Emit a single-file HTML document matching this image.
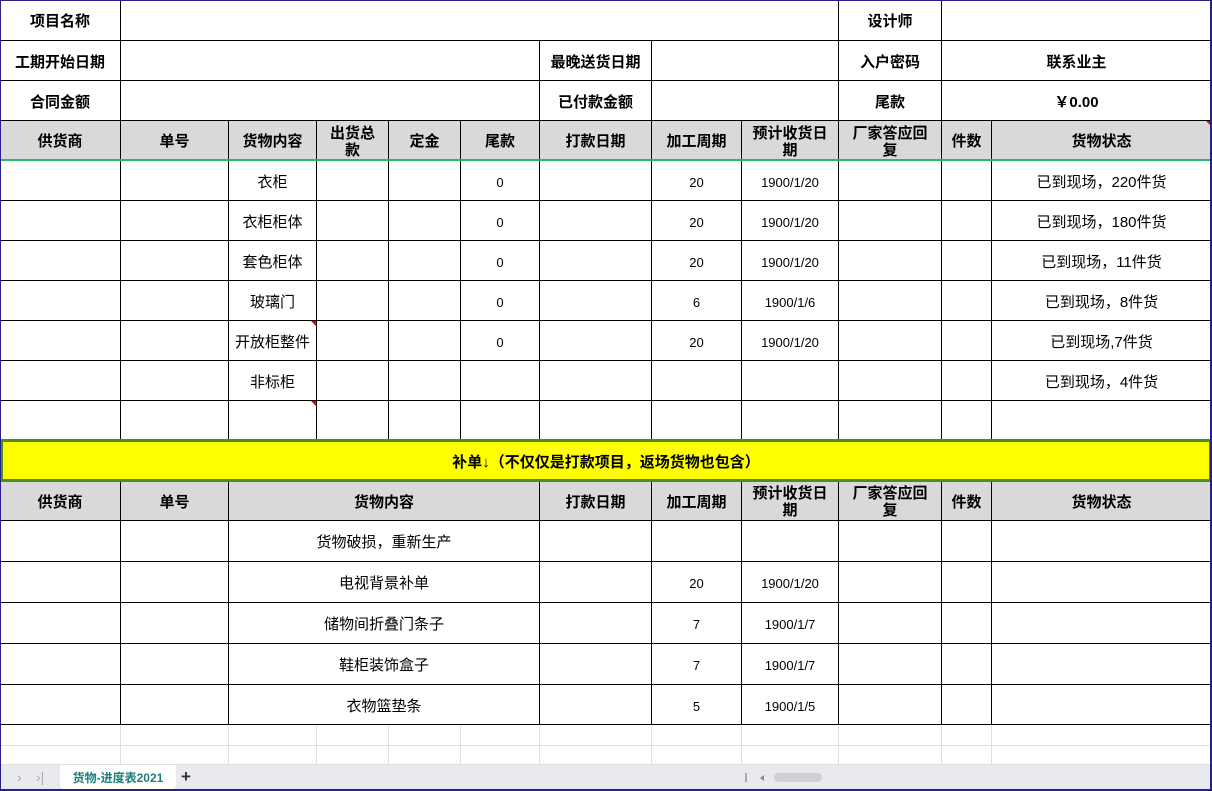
<!DOCTYPE html>
<html><head><meta charset="utf-8"><style>
*{margin:0;padding:0;box-sizing:border-box}
body{width:1212px;height:791px;overflow:hidden;background:#fff;font-family:"Liberation Sans","Noto Sans CJK SC",sans-serif;font-size:15px;color:#000;position:relative}
.r{position:absolute;left:0;width:1212px}
.c{position:absolute;top:0;height:100%;border-right:1px solid #000;border-bottom:1px solid #000;display:flex;align-items:center;justify-content:center;text-align:center;line-height:15px;padding-top:3px}
.b{font-weight:bold}
.h .c{background:#d9d9d9;font-weight:bold;line-height:17px;padding-top:2px}
.n{font-size:13px}
.g{position:absolute;top:0;height:100%;border-right:1px solid #e0e0e0;border-bottom:1px solid #e0e0e0}
.tri{position:absolute;right:0;top:0;width:0;height:0;border-top:5px solid #e00;border-left:5px solid transparent}
</style></head><body>
<div class="r" style="top:0;height:41px">
<div class="c b" style="left:0;width:121px">项目名称</div>
<div class="c" style="left:121px;width:718px"></div>
<div class="c b" style="left:839px;width:103px">设计师</div>
<div class="c" style="left:942px;width:270px"></div>
</div>
<div class="r" style="top:41px;height:40px">
<div class="c b" style="left:0;width:121px">工期开始日期</div>
<div class="c" style="left:121px;width:419px"></div>
<div class="c b" style="left:540px;width:112px">最晚送货日期</div>
<div class="c" style="left:652px;width:187px"></div>
<div class="c b" style="left:839px;width:103px">入户密码</div>
<div class="c b" style="left:942px;width:270px">联系业主</div>
</div>
<div class="r" style="top:81px;height:40px">
<div class="c b" style="left:0;width:121px">合同金额</div>
<div class="c" style="left:121px;width:419px"></div>
<div class="c b" style="left:540px;width:112px">已付款金额</div>
<div class="c" style="left:652px;width:187px"></div>
<div class="c b" style="left:839px;width:103px">尾款</div>
<div class="c b" style="left:942px;width:270px">￥0.00</div>
</div>
<div class="r h" style="top:121px;height:40px">
<div class="c" style="left:0;width:121px">供货商</div>
<div class="c" style="left:121px;width:108px">单号</div>
<div class="c" style="left:229px;width:88px">货物内容</div>
<div class="c" style="left:317px;width:72px">出货总<br>款</div>
<div class="c" style="left:389px;width:72px">定金</div>
<div class="c" style="left:461px;width:79px">尾款</div>
<div class="c" style="left:540px;width:112px">打款日期</div>
<div class="c" style="left:652px;width:90px">加工周期</div>
<div class="c" style="left:742px;width:97px">预计收货日<br>期</div>
<div class="c" style="left:839px;width:103px">厂家答应回<br>复</div>
<div class="c" style="left:942px;width:50px">件数</div>
<div class="c" style="left:992px;width:220px">货物状态<span class="tri"></span></div>
</div>
<div style="position:absolute;top:159px;left:0;width:1212px;height:2px;background:#2bb673"></div>

<div class="r" style="top:161px;height:40px"><div class="c" style="left:0;width:121px"></div><div class="c" style="left:121px;width:108px"></div><div class="c" style="left:229px;width:88px">衣柜</div><div class="c" style="left:317px;width:72px"></div><div class="c" style="left:389px;width:72px"></div><div class="c n" style="left:461px;width:79px">0</div><div class="c" style="left:540px;width:112px"></div><div class="c n" style="left:652px;width:90px">20</div><div class="c n" style="left:742px;width:97px">1900/1/20</div><div class="c" style="left:839px;width:103px"></div><div class="c" style="left:942px;width:50px"></div><div class="c" style="left:992px;width:220px">已到现场，220件货</div></div>
<div class="r" style="top:201px;height:40px"><div class="c" style="left:0;width:121px"></div><div class="c" style="left:121px;width:108px"></div><div class="c" style="left:229px;width:88px">衣柜柜体</div><div class="c" style="left:317px;width:72px"></div><div class="c" style="left:389px;width:72px"></div><div class="c n" style="left:461px;width:79px">0</div><div class="c" style="left:540px;width:112px"></div><div class="c n" style="left:652px;width:90px">20</div><div class="c n" style="left:742px;width:97px">1900/1/20</div><div class="c" style="left:839px;width:103px"></div><div class="c" style="left:942px;width:50px"></div><div class="c" style="left:992px;width:220px">已到现场，180件货</div></div>
<div class="r" style="top:241px;height:40px"><div class="c" style="left:0;width:121px"></div><div class="c" style="left:121px;width:108px"></div><div class="c" style="left:229px;width:88px">套色柜体</div><div class="c" style="left:317px;width:72px"></div><div class="c" style="left:389px;width:72px"></div><div class="c n" style="left:461px;width:79px">0</div><div class="c" style="left:540px;width:112px"></div><div class="c n" style="left:652px;width:90px">20</div><div class="c n" style="left:742px;width:97px">1900/1/20</div><div class="c" style="left:839px;width:103px"></div><div class="c" style="left:942px;width:50px"></div><div class="c" style="left:992px;width:220px">已到现场，11件货</div></div>
<div class="r" style="top:281px;height:40px"><div class="c" style="left:0;width:121px"></div><div class="c" style="left:121px;width:108px"></div><div class="c" style="left:229px;width:88px">玻璃门</div><div class="c" style="left:317px;width:72px"></div><div class="c" style="left:389px;width:72px"></div><div class="c n" style="left:461px;width:79px">0</div><div class="c" style="left:540px;width:112px"></div><div class="c n" style="left:652px;width:90px">6</div><div class="c n" style="left:742px;width:97px">1900/1/6</div><div class="c" style="left:839px;width:103px"></div><div class="c" style="left:942px;width:50px"></div><div class="c" style="left:992px;width:220px">已到现场，8件货</div></div>
<div class="r" style="top:321px;height:40px"><div class="c" style="left:0;width:121px"></div><div class="c" style="left:121px;width:108px"></div><div class="c" style="left:229px;width:88px">开放柜整件<span class="tri"></span></div><div class="c" style="left:317px;width:72px"></div><div class="c" style="left:389px;width:72px"></div><div class="c n" style="left:461px;width:79px">0</div><div class="c" style="left:540px;width:112px"></div><div class="c n" style="left:652px;width:90px">20</div><div class="c n" style="left:742px;width:97px">1900/1/20</div><div class="c" style="left:839px;width:103px"></div><div class="c" style="left:942px;width:50px"></div><div class="c" style="left:992px;width:220px">已到现场,7件货</div></div>
<div class="r" style="top:361px;height:40px"><div class="c" style="left:0;width:121px"></div><div class="c" style="left:121px;width:108px"></div><div class="c" style="left:229px;width:88px">非标柜</div><div class="c" style="left:317px;width:72px"></div><div class="c" style="left:389px;width:72px"></div><div class="c" style="left:461px;width:79px"></div><div class="c" style="left:540px;width:112px"></div><div class="c" style="left:652px;width:90px"></div><div class="c" style="left:742px;width:97px"></div><div class="c" style="left:839px;width:103px"></div><div class="c" style="left:942px;width:50px"></div><div class="c" style="left:992px;width:220px">已到现场，4件货</div></div>
<div class="r" style="top:401px;height:39px"><div class="c" style="left:0;width:121px"></div><div class="c" style="left:121px;width:108px"></div><div class="c" style="left:229px;width:88px"><span class="tri"></span></div><div class="c" style="left:317px;width:72px"></div><div class="c" style="left:389px;width:72px"></div><div class="c" style="left:461px;width:79px"></div><div class="c" style="left:540px;width:112px"></div><div class="c" style="left:652px;width:90px"></div><div class="c" style="left:742px;width:97px"></div><div class="c" style="left:839px;width:103px"></div><div class="c" style="left:942px;width:50px"></div><div class="c" style="left:992px;width:220px"></div></div>

<div style="position:absolute;top:439px;left:0;width:1212px;height:43px;background:#ffff00;border:3px solid #4a8f24;display:flex;align-items:center;justify-content:center;font-weight:bold;font-size:15px;padding-top:1px">补单↓（不仅仅是打款项目，返场货物也包含）</div>

<div class="r h" style="top:482px;height:39px">
<div class="c" style="left:0;width:121px">供货商</div>
<div class="c" style="left:121px;width:108px">单号</div>
<div class="c" style="left:229px;width:311px">货物内容</div>
<div class="c" style="left:540px;width:112px">打款日期</div>
<div class="c" style="left:652px;width:90px">加工周期</div>
<div class="c" style="left:742px;width:97px">预计收货日<br>期</div>
<div class="c" style="left:839px;width:103px">厂家答应回<br>复</div>
<div class="c" style="left:942px;width:50px">件数</div>
<div class="c" style="left:992px;width:220px">货物状态</div>
</div>

<div class="r" style="top:521px;height:41px"><div class="c" style="left:0;width:121px"></div><div class="c" style="left:121px;width:108px"></div><div class="c" style="left:229px;width:311px">货物破损，重新生产</div><div class="c" style="left:540px;width:112px"></div><div class="c" style="left:652px;width:90px"></div><div class="c" style="left:742px;width:97px"></div><div class="c" style="left:839px;width:103px"></div><div class="c" style="left:942px;width:50px"></div><div class="c" style="left:992px;width:220px"></div></div>
<div class="r" style="top:562px;height:41px"><div class="c" style="left:0;width:121px"></div><div class="c" style="left:121px;width:108px"></div><div class="c" style="left:229px;width:311px">电视背景补单</div><div class="c" style="left:540px;width:112px"></div><div class="c n" style="left:652px;width:90px">20</div><div class="c n" style="left:742px;width:97px">1900/1/20</div><div class="c" style="left:839px;width:103px"></div><div class="c" style="left:942px;width:50px"></div><div class="c" style="left:992px;width:220px"></div></div>
<div class="r" style="top:603px;height:41px"><div class="c" style="left:0;width:121px"></div><div class="c" style="left:121px;width:108px"></div><div class="c" style="left:229px;width:311px">储物间折叠门条子</div><div class="c" style="left:540px;width:112px"></div><div class="c n" style="left:652px;width:90px">7</div><div class="c n" style="left:742px;width:97px">1900/1/7</div><div class="c" style="left:839px;width:103px"></div><div class="c" style="left:942px;width:50px"></div><div class="c" style="left:992px;width:220px"></div></div>
<div class="r" style="top:644px;height:41px"><div class="c" style="left:0;width:121px"></div><div class="c" style="left:121px;width:108px"></div><div class="c" style="left:229px;width:311px">鞋柜装饰盒子</div><div class="c" style="left:540px;width:112px"></div><div class="c n" style="left:652px;width:90px">7</div><div class="c n" style="left:742px;width:97px">1900/1/7</div><div class="c" style="left:839px;width:103px"></div><div class="c" style="left:942px;width:50px"></div><div class="c" style="left:992px;width:220px"></div></div>
<div class="r" style="top:685px;height:40px"><div class="c" style="left:0;width:121px"></div><div class="c" style="left:121px;width:108px"></div><div class="c" style="left:229px;width:311px">衣物篮垫条</div><div class="c" style="left:540px;width:112px"></div><div class="c n" style="left:652px;width:90px">5</div><div class="c n" style="left:742px;width:97px">1900/1/5</div><div class="c" style="left:839px;width:103px"></div><div class="c" style="left:942px;width:50px"></div><div class="c" style="left:992px;width:220px"></div></div>

<div class="r" style="top:725px;height:21px"><div class="g" style="left:0;width:121px"></div><div class="g" style="left:121px;width:108px"></div><div class="g" style="left:229px;width:88px"></div><div class="g" style="left:317px;width:72px"></div><div class="g" style="left:389px;width:72px"></div><div class="g" style="left:461px;width:79px"></div><div class="g" style="left:540px;width:112px"></div><div class="g" style="left:652px;width:90px"></div><div class="g" style="left:742px;width:97px"></div><div class="g" style="left:839px;width:103px"></div><div class="g" style="left:942px;width:50px"></div><div class="g" style="left:992px;width:220px"></div></div>
<div class="r" style="top:746px;height:19px"><div class="g" style="left:0;width:121px"></div><div class="g" style="left:121px;width:108px"></div><div class="g" style="left:229px;width:88px"></div><div class="g" style="left:317px;width:72px"></div><div class="g" style="left:389px;width:72px"></div><div class="g" style="left:461px;width:79px"></div><div class="g" style="left:540px;width:112px"></div><div class="g" style="left:652px;width:90px"></div><div class="g" style="left:742px;width:97px"></div><div class="g" style="left:839px;width:103px"></div><div class="g" style="left:942px;width:50px"></div><div class="g" style="left:992px;width:220px"></div></div>

<div style="position:absolute;top:765px;left:0;width:1212px;height:26px;background:#e8eaf0">
<span style="position:absolute;left:17px;top:4px;color:#aaa;font-size:14px">›</span>
<span style="position:absolute;left:36px;top:4px;color:#aaa;font-size:14px">›|</span>
<div style="position:absolute;left:60px;top:0;width:116px;height:24px;background:#fff;border-radius:0 0 4px 4px;color:#1a7f7a;font-weight:bold;font-size:12px;display:flex;align-items:center;justify-content:center">货物-进度表2021</div>
<span style="position:absolute;left:181px;top:2px;font-size:17px;font-weight:bold;color:#333">+</span>
<div style="position:absolute;left:745px;top:8px;width:2px;height:9px;background:#aaa"></div>
<div style="position:absolute;left:760px;top:10px;width:0;height:0;border-right:4px solid #888;border-top:3px solid transparent;border-bottom:3px solid transparent"></div>
<div style="position:absolute;left:774px;top:8px;width:48px;height:9px;border-radius:5px;background:#cfd0d4"></div>
</div>
<div style="position:absolute;left:0;top:0;width:1212px;height:791px;border:1px solid #2a1f8a;border-right-width:2px;border-bottom-width:2px;pointer-events:none"></div>
</body></html>
